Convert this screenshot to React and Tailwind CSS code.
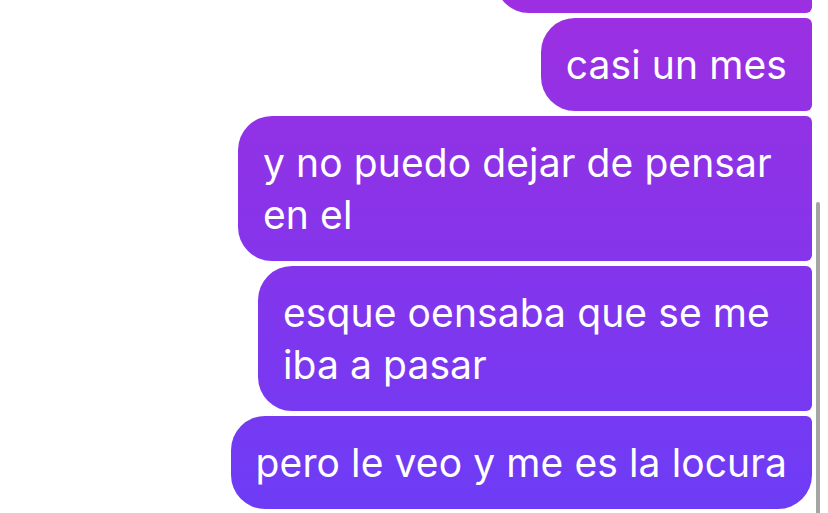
const bubbleBg =
  'bg-fixed bg-[linear-gradient(180deg,#9d2fe1_0px,#8b33e8_190px,#6d3cf6_513px)]';

const messages = [
  { id: 1, lines: ['casi un mes'], shape: 'rounded-l-[34px] rounded-r-[6px]' },
  {
    id: 2,
    lines: ['y no puedo dejar de pensar', 'en el'],
    shape: 'w-[574px] rounded-l-[34px] rounded-r-[6px]',
  },
  {
    id: 3,
    lines: ['esque oensaba que se me', 'iba a pasar'],
    shape: 'w-[554px] rounded-l-[34px] rounded-r-[6px]',
  },
  {
    id: 4,
    lines: ['pero le veo y me es la locura'],
    shape: 'rounded-l-[34px] rounded-tr-[6px] rounded-br-[34px]',
  },
];

export default function App() {
  return (
    <div
      className="relative h-[513px] w-[828px] overflow-hidden bg-white"
      style={{ fontFamily: 'Inter, "Noto Sans", sans-serif' }}
    >
      <div className="flex h-full flex-col items-end justify-end gap-[5px] pb-[4px] pr-[16px]">
        {/* previous message, mostly scrolled out of view */}
        <div className={`h-[93px] w-[317px] shrink-0 rounded-bl-[34px] rounded-br-[6px] rounded-t-[6px] ${bubbleBg}`} />

        {messages.map((message) => (
          <div
            key={message.id}
            className={`shrink-0 px-[25px] py-[20.5px] text-[39px] leading-[52px] tracking-[0.1px] text-white ${bubbleBg} ${message.shape}`}
          >
            {message.lines.map((line) => (
              <div key={line} className="whitespace-nowrap">
                {line}
              </div>
            ))}
          </div>
        ))}
      </div>

      <div className="absolute right-[8px] top-[202px] h-[320px] w-[4px] rounded-full bg-[#a4a4a4]" />
    </div>
  );
}
